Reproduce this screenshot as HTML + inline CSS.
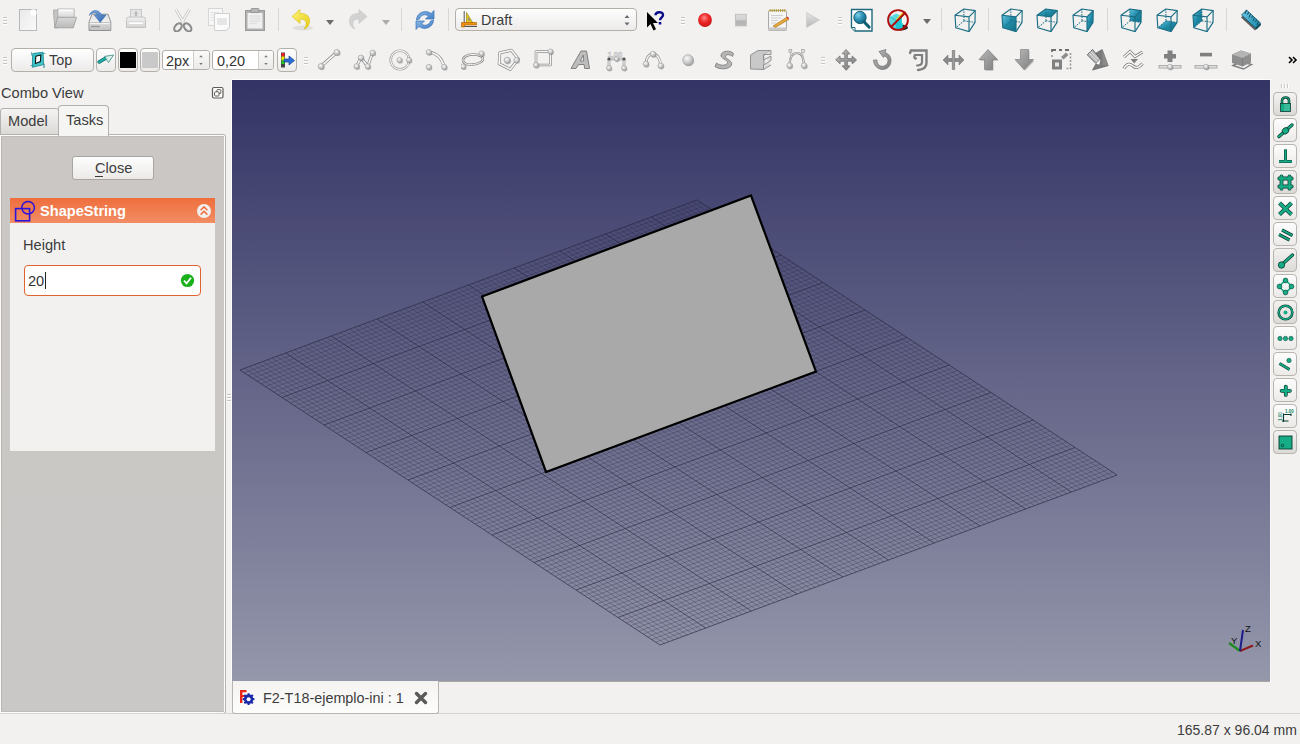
<!DOCTYPE html>
<html><head><meta charset="utf-8">
<style>
*{margin:0;padding:0;box-sizing:border-box}
html,body{width:1300px;height:744px;overflow:hidden;background:#f2f1f0;font-family:"Liberation Sans",sans-serif;color:#3c3c3c;font-size:14px}
.abs{position:absolute}
.t{position:absolute;white-space:nowrap;line-height:1}

</style></head><body>
<svg width="0" height="0" style="position:absolute">
<defs>
<linearGradient id="gPaper" x1="0" y1="0" x2="1" y2="1"><stop offset="0" stop-color="#e9e9e9"/><stop offset="1" stop-color="#fafafa"/></linearGradient>
<linearGradient id="gFold" x1="0" y1="0" x2="0" y2="1"><stop offset="0" stop-color="#d8d8d8"/><stop offset="1" stop-color="#bababa"/></linearGradient>
<linearGradient id="gDrive" x1="0" y1="0" x2="0" y2="1"><stop offset="0" stop-color="#dedede"/><stop offset="0.55" stop-color="#f4f4f4"/><stop offset="1" stop-color="#b0b0b0"/></linearGradient>
<linearGradient id="gPrint" x1="0" y1="0" x2="0" y2="1"><stop offset="0" stop-color="#f0f0f0"/><stop offset="1" stop-color="#d4d4d4"/></linearGradient>
<linearGradient id="gYel" x1="0" y1="0" x2="1" y2="1"><stop offset="0" stop-color="#fcf07a"/><stop offset="1" stop-color="#e9cf12"/></linearGradient>
<linearGradient id="gBlue" x1="0" y1="0" x2="1" y2="1"><stop offset="0" stop-color="#8fb9e8"/><stop offset="1" stop-color="#3d7cc4"/></linearGradient>
<radialGradient id="gRed" cx="0.45" cy="0.35" r="0.7"><stop offset="0" stop-color="#ff8a8a"/><stop offset="0.45" stop-color="#ee2a2a"/><stop offset="1" stop-color="#c41212"/></radialGradient>
<linearGradient id="gStop" x1="0" y1="0" x2="0" y2="1"><stop offset="0" stop-color="#dcdcdc"/><stop offset="0.5" stop-color="#d0d0d0"/><stop offset="0.55" stop-color="#b4b4b4"/><stop offset="1" stop-color="#b8b8b8"/></linearGradient>
<linearGradient id="gPlay" x1="0" y1="0" x2="0" y2="1"><stop offset="0" stop-color="#e4e4e4"/><stop offset="1" stop-color="#b8b8b8"/></linearGradient>
<radialGradient id="gTeal" cx="0.35" cy="0.3" r="0.8"><stop offset="0" stop-color="#7fd0ec"/><stop offset="0.5" stop-color="#2a8fb0"/><stop offset="1" stop-color="#0f5f78"/></radialGradient>
<linearGradient id="gCube" x1="0" y1="0" x2="1" y2="1"><stop offset="0" stop-color="#5fc3e0"/><stop offset="0.5" stop-color="#1f8aa6"/><stop offset="1" stop-color="#136f88"/></linearGradient>
<linearGradient id="gRuler" x1="0" y1="0" x2="1" y2="1"><stop offset="0" stop-color="#6fc8ea"/><stop offset="1" stop-color="#1587a8"/></linearGradient>
<radialGradient id="gBall" cx="0.4" cy="0.35" r="0.7"><stop offset="0" stop-color="#fafafa"/><stop offset="0.6" stop-color="#c9c9c9"/><stop offset="1" stop-color="#9e9e9e"/></radialGradient>
<linearGradient id="gArr" x1="0" y1="0" x2="1" y2="1"><stop offset="0" stop-color="#b9b9b9"/><stop offset="1" stop-color="#7e7e7e"/></linearGradient>
<linearGradient id="gBtn" x1="0" y1="0" x2="0" y2="1"><stop offset="0" stop-color="#fdfdfd"/><stop offset="1" stop-color="#e9e8e6"/></linearGradient>
<linearGradient id="gPaper2" x1="0" y1="0" x2="0" y2="1"><stop offset="0" stop-color="#f8f8f8"/><stop offset="1" stop-color="#d6d6d6"/></linearGradient>
<linearGradient id="gDrive2" x1="0" y1="0" x2="0" y2="1"><stop offset="0" stop-color="#d9d9d9"/><stop offset="1" stop-color="#c2c2c2"/></linearGradient>
<linearGradient id="gBlue2" x1="0" y1="0" x2="1" y2="1"><stop offset="0" stop-color="#86aee0"/><stop offset="1" stop-color="#2d64b0"/></linearGradient>
</defs></svg>

<svg class="abs" style="left:232px;top:80px" width="1038" height="601" viewBox="232 80 1038 601">
<defs><linearGradient id="bg" x1="0" y1="0" x2="0" y2="1">
<stop offset="0" stop-color="#333365"/><stop offset="1" stop-color="#9597ab"/></linearGradient></defs>
<rect x="232" y="80" width="1038" height="601" fill="url(#bg)"/>
<path d="M244.2 372.8L701.2 202.8M244.6 368.3L664.6 643.3M248.4 375.5L705.4 205.5M249.1 366.6L669.1 641.6M252.6 378.2L709.6 208.2M253.7 364.9L673.7 639.9M256.8 381.0L713.8 211.0M258.3 363.2L678.3 638.2M261.0 383.8L718.0 213.8M262.9 361.5L682.9 636.5M265.2 386.5L722.2 216.5M267.4 359.8L687.4 634.8M269.4 389.2L726.4 219.2M272.0 358.1L692.0 633.1M273.6 392.0L730.6 222.0M276.6 356.4L696.6 631.4M277.8 394.8L734.8 224.8M281.1 354.7L701.1 629.7M286.2 400.2L743.2 230.2M290.3 351.3L710.3 626.3M290.4 403.0L747.4 233.0M294.8 349.6L714.8 624.6M294.6 405.8L751.6 235.8M299.4 347.9L719.4 622.9M298.8 408.5L755.8 238.5M304.0 346.2L724.0 621.2M303.0 411.2L760.0 241.2M308.6 344.5L728.5 619.5M307.2 414.0L764.2 244.0M313.1 342.8L733.1 617.8M311.4 416.8L768.4 246.8M317.7 341.1L737.7 616.1M315.6 419.5L772.6 249.5M322.3 339.4L742.3 614.4M319.8 422.2L776.8 252.2M326.8 337.7L746.8 612.7M328.2 427.8L785.2 257.8M336.0 334.3L756.0 609.3M332.4 430.5L789.4 260.5M340.5 332.6L760.5 607.6M336.6 433.2L793.6 263.2M345.1 330.9L765.1 605.9M340.8 436.0L797.8 266.0M349.7 329.2L769.7 604.2M345.0 438.8L802.0 268.8M354.2 327.5L774.2 602.5M349.2 441.5L806.2 271.5M358.8 325.8L778.8 600.8M353.4 444.2L810.4 274.2M363.4 324.1L783.4 599.1M357.6 447.0L814.6 277.0M368.0 322.4L788.0 597.4M361.8 449.8L818.8 279.8M372.5 320.7L792.5 595.7M370.2 455.2L827.2 285.2M381.7 317.3L801.7 592.3M374.4 458.0L831.4 288.0M386.2 315.6L806.2 590.6M378.6 460.8L835.6 290.8M390.8 313.9L810.8 588.9M382.8 463.5L839.8 293.5M395.4 312.2L815.4 587.2M387.0 466.2L844.0 296.2M399.9 310.5L820.0 585.5M391.2 469.0L848.2 299.0M404.5 308.8L824.5 583.8M395.4 471.8L852.4 301.8M409.1 307.1L829.1 582.1M399.6 474.5L856.6 304.5M413.7 305.4L833.7 580.4M403.8 477.2L860.8 307.2M418.2 303.7L838.2 578.7M412.2 482.8L869.2 312.8M427.4 300.3L847.4 575.3M416.4 485.5L873.4 315.5M431.9 298.6L851.9 573.6M420.6 488.2L877.6 318.2M436.5 296.9L856.5 571.9M424.8 491.0L881.8 321.0M441.1 295.2L861.1 570.2M429.0 493.8L886.0 323.8M445.6 293.5L865.6 568.5M433.2 496.5L890.2 326.5M450.2 291.8L870.2 566.8M437.4 499.2L894.4 329.2M454.8 290.1L874.8 565.1M441.6 502.0L898.6 332.0M459.4 288.4L879.4 563.4M445.8 504.8L902.8 334.8M463.9 286.7L883.9 561.7M454.2 510.2L911.2 340.2M473.1 283.3L893.1 558.3M458.4 513.0L915.4 343.0M477.6 281.6L897.6 556.6M462.6 515.8L919.6 345.8M482.2 279.9L902.2 554.9M466.8 518.5L923.8 348.5M486.8 278.2L906.8 553.2M471.0 521.2L928.0 351.2M491.4 276.5L911.4 551.5M475.2 524.0L932.2 354.0M495.9 274.8L915.9 549.8M479.4 526.8L936.4 356.8M500.5 273.1L920.5 548.1M483.6 529.5L940.6 359.5M505.1 271.4L925.1 546.4M487.8 532.2L944.8 362.2M509.6 269.7L929.6 544.7M496.2 537.8L953.2 367.8M518.8 266.3L938.8 541.3M500.4 540.5L957.4 370.5M523.3 264.6L943.3 539.6M504.6 543.2L961.6 373.2M527.9 262.9L947.9 537.9M508.8 546.0L965.8 376.0M532.5 261.2L952.5 536.2M513.0 548.8L970.0 378.8M537.0 259.5L957.0 534.5M517.2 551.5L974.2 381.5M541.6 257.8L961.6 532.8M521.4 554.2L978.4 384.2M546.2 256.1L966.2 531.1M525.6 557.0L982.6 387.0M550.8 254.4L970.8 529.4M529.8 559.8L986.8 389.8M555.3 252.7L975.3 527.7M538.2 565.2L995.2 395.2M564.5 249.3L984.5 524.3M542.4 568.0L999.4 398.0M569.0 247.6L989.0 522.6M546.6 570.8L1003.6 400.8M573.6 245.9L993.6 520.9M550.8 573.5L1007.8 403.5M578.2 244.2L998.2 519.2M555.0 576.2L1012.0 406.2M582.8 242.5L1002.8 517.5M559.2 579.0L1016.2 409.0M587.3 240.8L1007.3 515.8M563.4 581.8L1020.4 411.8M591.9 239.1L1011.9 514.1M567.6 584.5L1024.6 414.5M596.5 237.4L1016.5 512.4M571.8 587.2L1028.8 417.2M601.0 235.7L1021.0 510.7M580.2 592.8L1037.2 422.8M610.2 232.3L1030.2 507.3M584.4 595.5L1041.4 425.5M614.7 230.6L1034.7 505.6M588.6 598.2L1045.6 428.2M619.3 228.9L1039.3 503.9M592.8 601.0L1049.8 431.0M623.9 227.2L1043.9 502.2M597.0 603.8L1054.0 433.8M628.5 225.5L1048.5 500.5M601.2 606.5L1058.2 436.5M633.0 223.8L1053.0 498.8M605.4 609.2L1062.4 439.2M637.6 222.1L1057.6 497.1M609.6 612.0L1066.6 442.0M642.2 220.4L1062.2 495.4M613.8 614.8L1070.8 444.8M646.7 218.7L1066.7 493.7M622.2 620.2L1079.2 450.2M655.9 215.3L1075.9 490.3M626.4 623.0L1083.4 453.0M660.4 213.6L1080.4 488.6M630.6 625.8L1087.6 455.8M665.0 211.9L1085.0 486.9M634.8 628.5L1091.8 458.5M669.6 210.2L1089.6 485.2M639.0 631.2L1096.0 461.2M674.1 208.5L1094.2 483.5M643.2 634.0L1100.2 464.0M678.7 206.8L1098.7 481.8M647.4 636.8L1104.4 466.8M683.3 205.1L1103.3 480.1M651.6 639.5L1108.6 469.5M687.9 203.4L1107.9 478.4M655.8 642.2L1112.8 472.2M692.4 201.7L1112.4 476.7" stroke="#23233a" stroke-opacity="0.28" stroke-width="1" fill="none"/>
<path d="M240.0 370.0L697.0 200.0M240.0 370.0L660.0 645.0M282.0 397.5L739.0 227.5M285.7 353.0L705.7 628.0M324.0 425.0L781.0 255.0M331.4 336.0L751.4 611.0M366.0 452.5L823.0 282.5M377.1 319.0L797.1 594.0M408.0 480.0L865.0 310.0M422.8 302.0L842.8 577.0M450.0 507.5L907.0 337.5M468.5 285.0L888.5 560.0M492.0 535.0L949.0 365.0M514.2 268.0L934.2 543.0M534.0 562.5L991.0 392.5M559.9 251.0L979.9 526.0M576.0 590.0L1033.0 420.0M605.6 234.0L1025.6 509.0M618.0 617.5L1075.0 447.5M651.3 217.0L1071.3 492.0M660.0 645.0L1117.0 475.0M697.0 200.0L1117.0 475.0" stroke="#23233a" stroke-opacity="0.62" stroke-width="1" fill="none"/>
<path d="M482 296.5L751 195.5L816 371.5L546 472Z" fill="#a9a9a9" stroke="#000" stroke-width="2.2" stroke-linejoin="miter"/>
<g>
<path d="M1240 651L1253 645.5" stroke="#8c1c1c" stroke-width="2.2"/>
<path d="M1240 651L1229 643" stroke="#1c8c1c" stroke-width="2.2"/>
<path d="M1240 651L1243 630" stroke="#1c1c8c" stroke-width="2"/>
<text x="1245" y="632" font-family="Liberation Sans" font-size="9.5" fill="#111">Z</text>
<text x="1231" y="644" font-family="Liberation Sans" font-size="9.5" fill="#111">Y</text>
<text x="1255" y="647" font-family="Liberation Sans" font-size="9.5" fill="#111">X</text>
</g>

</svg>
<div class="t" style="left:1px;top:86px;font-size:14.6px">Combo View</div>
<svg class="abs" style="left:210px;top:85px" width="16" height="15" viewBox="0 0 16 15">
<rect x="2.5" y="2.5" width="10.5" height="10.5" rx="1.5" fill="#fdfdfc" stroke="#5f5c57" stroke-width="1.2"/>
<rect x="6.8" y="4.6" width="4" height="4" rx="0.8" fill="none" stroke="#5f5c57" stroke-width="1"/>
<rect x="4.6" y="6.8" width="4.4" height="4.2" rx="0.8" fill="#fff" stroke="#5f5c57" stroke-width="1"/>
</svg>
<!-- tabs -->
<div class="abs" style="left:0;top:134px;width:226px;height:580px;border:1px solid #b8b4af;border-left:none;border-radius:0 3px 3px 0;background:#fbfbfa"></div>
<div class="abs" style="left:0;top:135px;width:1px;height:578px;background:#fbfbfa"></div>
<div class="abs" style="left:1px;top:136px;width:223px;height:576px;background:linear-gradient(#cbc7c4,#c9c8c6);border-left:1px solid #b9b6b2;border-top:1px solid #c0bdb9;border-bottom:1px solid #c0bdb9"></div>
<div class="abs" style="left:0;top:108px;width:59px;height:27px;border:1px solid #b4b0ab;border-radius:3px 3px 0 0;background:linear-gradient(#f4f3f2,#dcdad7)"></div>
<div class="t" style="left:8px;top:114px;font-size:14.6px">Model</div>
<div class="abs" style="left:58px;top:105px;width:51px;height:31px;border:1px solid #b4b0ab;border-bottom:none;border-radius:4px 4px 0 0;background:#f5f5f4"></div>
<div class="t" style="left:66px;top:113px;font-size:14.6px">Tasks</div>
<!-- close btn -->
<div class="abs" style="left:72px;top:156px;width:82px;height:24px;border:1px solid #a9a5a0;border-radius:3px;background:linear-gradient(#fdfdfd,#ebeae8)"></div>
<div class="t" style="left:95px;top:161px;font-size:14.6px">Close</div>
<div class="abs" style="left:95px;top:176px;width:8px;height:1px;background:#3c3c3c"></div>
<!-- header -->
<div class="abs" style="left:10px;top:198px;width:205px;height:25px;background:linear-gradient(#ef6e3d,#f28d63)"></div>
<svg class="abs" style="left:10px;top:196px" width="30" height="30" viewBox="0 0 30 30">
<rect x="5.6" y="12.6" width="14" height="12.2" fill="none" stroke="#2b14dc" stroke-width="1.6"/>
<circle cx="18.1" cy="11.7" r="6.3" fill="none" stroke="#2b14dc" stroke-width="1.5"/>
</svg>
<div class="t" style="left:40px;top:204px;font-size:14.6px;font-weight:bold;color:#fff">ShapeString</div>
<svg class="abs" style="left:196px;top:203px" width="16" height="16" viewBox="0 0 16 16">
<circle cx="8" cy="8" r="7" fill="#f1f0ef"/>
<path d="M4.6 7.2L8 3.9L11.4 7.2M4.6 11.6L8 8.3L11.4 11.6" fill="none" stroke="#ef6e3d" stroke-width="1.5"/>
</svg>
<!-- content -->
<div class="abs" style="left:10px;top:223px;width:205px;height:228px;background:#f2f1f0"></div>
<div class="t" style="left:23px;top:238px;font-size:14.6px">Height</div>
<div class="abs" style="left:24px;top:265px;width:177px;height:31px;border:1.5px solid #e2622f;border-radius:4px;background:#fff"></div>
<div class="t" style="left:28px;top:274px;font-size:14.6px;color:#333">20</div>
<div class="abs" style="left:45px;top:272px;width:1px;height:17px;background:#222"></div>
<svg class="abs" style="left:180px;top:273px" width="15" height="15" viewBox="0 0 15 15">
<circle cx="7.5" cy="7.5" r="6.6" fill="#1ab01a"/>
<path d="M4 7.6L6.6 10.3L11 4.8" fill="none" stroke="#fff" stroke-width="1.8"/>
</svg>

<svg class="abs" style="left:16.0px;top:8.0px" width="24" height="24" viewBox="0 0 24 24"><rect x="3.5" y="1.5" width="17" height="21" fill="url(#gPaper)" stroke="#b9b9b9"/>
<circle cx="17.5" cy="4.5" r="3.2" fill="#fff" opacity="0.9"/></svg>
<svg class="abs" style="left:52.5px;top:7.0px" width="24" height="24" viewBox="0 0 24 24"><path d="M0.3 3H5L4.8 20.8H1.8Z" fill="#c4c4c4" stroke="#a6a6a6" stroke-width="0.8"/>
<path d="M4.8 2H21.2V10.5H4.8Z" fill="url(#gPaper2)" stroke="#a9a9a9" stroke-width="0.8"/>
<path d="M6 3.2H20" stroke="#fff" stroke-width="1.2"/>
<path d="M4.8 10.3H23.5L20.3 20.8H1.5Z" fill="url(#gFold)" stroke="#9b9b9b" stroke-width="0.8"/></svg>
<svg class="abs" style="left:88.0px;top:8.0px" width="24" height="24" viewBox="0 0 24 24"><path d="M4 6.2H20L22.8 14V22.5H1V14Z" fill="url(#gDrive)" stroke="#8a8a8a" stroke-width="0.9"/>
<path d="M1.5 14.5H22.3" stroke="#b5b5b5" stroke-width="0.8"/>
<path d="M2 16H22.3V22H2Z" fill="url(#gDrive2)"/>
<path d="M3 18.5H12" stroke="#9a9a9a" stroke-width="1.6"/>
<path d="M15.5 17V21M17.5 17V21M19.5 17V21" stroke="#c8c8c8" stroke-width="0.9"/>
<path d="M1.2 7.5C2.5 2 10 0 13.8 7H18L12.2 14.5L6.3 7H10C7.5 3.8 3.8 4.5 1.2 7.5Z" fill="url(#gBlue2)" stroke="#2f66a8" stroke-width="0.5"/></svg>
<svg class="abs" style="left:124.0px;top:8.0px" width="24" height="24" viewBox="0 0 24 24"><rect x="6.5" y="1.5" width="11" height="9" fill="#e6e6e6" stroke="#c8c8c8"/>
<path d="M12 3L9.5 5.8H11V8H13V5.8H14.5Z" fill="#bbb"/>
<path d="M2.5 11.5Q2.5 9 5 9H19Q21.5 9 21.5 11.5V19.5H2.5Z" fill="url(#gPrint)" stroke="#c4c4c4"/>
<rect x="4.5" y="14" width="15" height="2.5" rx="1" fill="#fff" stroke="#cfcfcf" stroke-width="0.6"/></svg>
<svg class="abs" style="left:171.0px;top:7.5px" width="24" height="24" viewBox="0 0 24 24"><path d="M4.8 1.2L12.5 14.5M18.6 1.2L10.9 14.5" stroke="#c4c4c4" stroke-width="2.8"/>
<path d="M4.8 1.2L12.5 14.5M18.6 1.2L10.9 14.5" stroke="#f8f8f8" stroke-width="1.3"/>
<ellipse cx="7" cy="19.3" rx="4.6" ry="3" transform="rotate(-50 7 19.3)" fill="none" stroke="#8c8c8c" stroke-width="2.1"/>
<ellipse cx="16.6" cy="19.3" rx="4.6" ry="3" transform="rotate(50 16.6 19.3)" fill="none" stroke="#8c8c8c" stroke-width="2.1"/>
<path d="M10.5 15.5L9.5 17M12.9 15.5L13.9 17" stroke="#8c8c8c" stroke-width="1.6"/></svg>
<svg class="abs" style="left:206.5px;top:8.0px" width="24" height="24" viewBox="0 0 24 24"><rect x="1.5" y="0.5" width="14" height="17" fill="#f7f7f7" stroke="#d6d6d6"/>
<path d="M3.5 4.5H12M3.5 7H12M3.5 9.5H12M3.5 12H12" stroke="#e0e0e0"/>
<path d="M7.5 5.5H22.5V19L19.5 22.5H7.5Z" fill="#fbfbfb" stroke="#cfcfcf"/>
<rect x="10" y="10" width="10" height="7" fill="#e6e6e6"/></svg>
<svg class="abs" style="left:243.0px;top:8.0px" width="24" height="24" viewBox="0 0 24 24"><rect x="2.5" y="2.5" width="19" height="20" fill="#b0b0b0" stroke="#9a9a9a"/>
<rect x="4.5" y="5" width="15" height="15.5" fill="#f0f0f0"/>
<rect x="8" y="0.5" width="8" height="4" rx="1" fill="#b5b5b5" stroke="#8e8e8e" stroke-width="0.8"/>
<path d="M6.5 8H17.5M6.5 10.5H17.5M6.5 13H17.5M6.5 15.5H14" stroke="#e0e0e0" stroke-width="1.5"/></svg>
<svg class="abs" style="left:291.0px;top:7.5px" width="24" height="24" viewBox="0 0 24 24"><ellipse cx="12" cy="20" rx="10" ry="2.5" fill="#000" opacity="0.08"/>
<path d="M1 8.5L9 1.5V5.5C16 5 19 9 18.5 14C18 18 15.5 20.5 13 21C15.5 18 16 14 13.5 12C12 11 10.5 11 9 11.5V15.5Z" fill="url(#gYel)" stroke="#d7bb10" stroke-width="0.6"/></svg>
<svg class="abs" style="left:318.2px;top:9.5px" width="24" height="24" viewBox="0 0 24 24"><path d="M8 10H16L12 15Z" fill="#6c6c6c"/></svg>
<svg class="abs" style="left:344.2px;top:7.5px" width="24" height="24" viewBox="0 0 24 24"><path d="M23 8.5L15 1.5V5.5C8 5 5 9 5.5 14C6 18 8.5 20.5 11 21C8.5 18 8 14 10.5 12C12 11 13.5 11 15 11.5V15.5Z" fill="#d2d2d2" stroke="#c6c6c6" stroke-width="0.6"/></svg>
<svg class="abs" style="left:374.2px;top:9.5px" width="24" height="24" viewBox="0 0 24 24"><path d="M8 10H16L12 15Z" fill="#ababab"/></svg>
<svg class="abs" style="left:413.3px;top:7.5px" width="24" height="24" viewBox="0 0 24 24"><path d="M3.5 12C3.5 5 12 1 18 5.5L21 2.5V11H12.5L15.5 8C12 5.5 7.5 7 6.5 11Z" fill="url(#gBlue)" stroke="#3b74b8" stroke-width="0.7"/>
<path d="M20.5 12C20.5 19 12 23 6 18.5L3 21.5V13H11.5L8.5 16C12 18.5 16.5 17 17.5 13Z" fill="url(#gBlue)" stroke="#3b74b8" stroke-width="0.7"/></svg>
<svg class="abs" style="left:644.0px;top:8.0px" width="24" height="24" viewBox="0 0 24 24"><path d="M3 4V19.5L6.5 16L9.5 22.5L12 21.3L9 15H14Z" fill="#000"/>
<path d="M11.5 7.2C11.5 3.5 19 3 19 7C19 9.5 16 9.8 16 12.2" fill="none" stroke="#0a0a8c" stroke-width="2.4"/>
<rect x="14.7" y="14" width="2.6" height="2.5" fill="#0a0a8c"/></svg>
<svg class="abs" style="left:693.0px;top:7.7px" width="24" height="24" viewBox="0 0 24 24"><circle cx="12" cy="12" r="6.9" fill="url(#gRed)"/></svg>
<svg class="abs" style="left:729.3px;top:7.7px" width="24" height="24" viewBox="0 0 24 24"><rect x="6.5" y="6.3" width="10.8" height="11.6" fill="url(#gStop)" stroke="#bdbdbd" stroke-width="0.9"/></svg>
<svg class="abs" style="left:765.5px;top:7.5px" width="24" height="24" viewBox="0 0 24 24"><rect x="2.5" y="2.5" width="18" height="20" rx="1" fill="#f5f5f5" stroke="#a8a8a8"/>
<rect x="2.5" y="19.5" width="18" height="3" fill="#c8c8c8"/>
<path d="M3.5 2.5H19.5" stroke="#b39a2a" stroke-width="2.4" stroke-dasharray="1.2 0.9"/>
<path d="M5 7.5H17M5 10H15M5 12.5H12M5 15H10" stroke="#cfcfcf" stroke-width="1"/>
<path d="M7 18L20.5 9.5L22.5 11.5L9.5 19.5Z" fill="#e8a93a" stroke="#9a6a1a" stroke-width="0.6"/>
<path d="M20.5 9.5L22.5 11.5L23 10L21.5 8.6Z" fill="#d33"/></svg>
<svg class="abs" style="left:801.0px;top:7.7px" width="24" height="24" viewBox="0 0 24 24"><path d="M5.6 4.5V19.5L18.5 12Z" fill="url(#gPlay)" stroke="#c3c3c3" stroke-width="0.6"/></svg>
<svg class="abs" style="left:849.7px;top:7.5px" width="24" height="24" viewBox="0 0 24 24"><path d="M1.5 1.5H22V23H5L1.5 19.5Z" fill="#fff" stroke="#1d6a7e" stroke-width="1.4"/>
<path d="M1.5 19.5H5V23" fill="#fff" stroke="#1d6a7e" stroke-width="1"/>
<circle cx="10" cy="9.5" r="6.2" fill="url(#gTeal)" stroke="#0d5062" stroke-width="0.8"/>
<path d="M14.2 14L19 19" stroke="#0e5f74" stroke-width="3.2" stroke-linecap="round"/></svg>
<svg class="abs" style="left:886.0px;top:8.0px" width="24" height="24" viewBox="0 0 24 24"><ellipse cx="14.5" cy="19.5" rx="7.5" ry="3" fill="#222"/>
<path d="M3.5 9L10 5.5L16.5 8.5V20.5L10 22L3.5 19Z" fill="#5fd8e0"/>
<path d="M10 12V22M3.5 9L10 12L16.5 8.5" stroke="#33b5c0" stroke-width="0.8" fill="none"/>
<path d="M10 12L16.5 8.5V20.5L10 22Z" fill="#1cc8d6"/>
<path d="M16.5 15V8.5" stroke="#fff" stroke-width="1.2"/>
<path d="M10.5 12L17 5" stroke="#e8d41a" stroke-width="1.8"/>
<circle cx="19" cy="4" r="0.8" fill="#d08020"/>
<circle cx="12" cy="12" r="9.9" fill="none" stroke="#b00c0c" stroke-width="1.9"/>
<path d="M5 19L19 5" stroke="#b00c0c" stroke-width="1.9"/></svg>
<svg class="abs" style="left:914.5px;top:8.5px" width="24" height="24" viewBox="0 0 24 24"><path d="M8 10H16L12 15Z" fill="#6c6c6c"/></svg>
<svg class="abs" style="left:952.5px;top:7.8px" width="24" height="24" viewBox="0 0 24 24"><path d="M10.8 1.0L11.0 12.8M11.0 12.8L2.8 19.8M11.0 12.8L22.0 14.4" stroke="#1b6e84" stroke-width="1" stroke-dasharray="1.5 1" fill="none"/><path d="M2.0 7.2L10.8 1.0L22.2 2.6L22.0 14.4L16.0 23.6L2.8 19.8Z" fill="none" stroke="#1b6e84" stroke-width="1.15" stroke-linejoin="round"/><path d="M2.0 7.2L16.0 8.8L22.2 2.6M16.0 8.8L16.0 23.6" fill="none" stroke="#1b6e84" stroke-width="1.15"/></svg>
<svg class="abs" style="left:999.5px;top:7.8px" width="24" height="24" viewBox="0 0 24 24"><path d="M2.0 7.2L16.0 8.8L16.0 23.6L2.8 19.8Z" fill="url(#gCube)"/><path d="M10.8 1.0L11.0 12.8M11.0 12.8L2.8 19.8M11.0 12.8L22.0 14.4" stroke="#1b6e84" stroke-width="1" stroke-dasharray="1.5 1" fill="none"/><path d="M2.0 7.2L10.8 1.0L22.2 2.6L22.0 14.4L16.0 23.6L2.8 19.8Z" fill="none" stroke="#1b6e84" stroke-width="1.15" stroke-linejoin="round"/><path d="M2.0 7.2L16.0 8.8L22.2 2.6M16.0 8.8L16.0 23.6" fill="none" stroke="#1b6e84" stroke-width="1.15"/></svg>
<svg class="abs" style="left:1035.2px;top:7.8px" width="24" height="24" viewBox="0 0 24 24"><path d="M2.0 7.2L10.8 1.0L22.2 2.6L16.0 8.8Z" fill="url(#gCube)"/><path d="M10.8 1.0L11.0 12.8M11.0 12.8L2.8 19.8M11.0 12.8L22.0 14.4" stroke="#1b6e84" stroke-width="1" stroke-dasharray="1.5 1" fill="none"/><path d="M2.0 7.2L10.8 1.0L22.2 2.6L22.0 14.4L16.0 23.6L2.8 19.8Z" fill="none" stroke="#1b6e84" stroke-width="1.15" stroke-linejoin="round"/><path d="M2.0 7.2L16.0 8.8L22.2 2.6M16.0 8.8L16.0 23.6" fill="none" stroke="#1b6e84" stroke-width="1.15"/></svg>
<svg class="abs" style="left:1071.4px;top:7.8px" width="24" height="24" viewBox="0 0 24 24"><path d="M16.0 8.8L22.2 2.6L22.0 14.4L16.0 23.6Z" fill="url(#gCube)"/><path d="M10.8 1.0L11.0 12.8M11.0 12.8L2.8 19.8M11.0 12.8L22.0 14.4" stroke="#1b6e84" stroke-width="1" stroke-dasharray="1.5 1" fill="none"/><path d="M2.0 7.2L10.8 1.0L22.2 2.6L22.0 14.4L16.0 23.6L2.8 19.8Z" fill="none" stroke="#1b6e84" stroke-width="1.15" stroke-linejoin="round"/><path d="M2.0 7.2L16.0 8.8L22.2 2.6M16.0 8.8L16.0 23.6" fill="none" stroke="#1b6e84" stroke-width="1.15"/></svg>
<svg class="abs" style="left:1118.5px;top:7.8px" width="24" height="24" viewBox="0 0 24 24"><path d="M10.8 1.0L22.2 2.6L22.0 14.4L11.0 12.8Z" fill="url(#gCube)"/><path d="M10.8 1.0L11.0 12.8M11.0 12.8L2.8 19.8M11.0 12.8L22.0 14.4" stroke="#1b6e84" stroke-width="1" stroke-dasharray="1.5 1" fill="none"/><path d="M2.0 7.2L10.8 1.0L22.2 2.6L22.0 14.4L16.0 23.6L2.8 19.8Z" fill="none" stroke="#1b6e84" stroke-width="1.15" stroke-linejoin="round"/><path d="M2.0 7.2L16.0 8.8L22.2 2.6M16.0 8.8L16.0 23.6" fill="none" stroke="#1b6e84" stroke-width="1.15"/></svg>
<svg class="abs" style="left:1154.8px;top:7.8px" width="24" height="24" viewBox="0 0 24 24"><path d="M2.8 19.8L16.0 23.6L22.0 14.4L11.0 12.8Z" fill="url(#gCube)"/><path d="M10.8 1.0L11.0 12.8M11.0 12.8L2.8 19.8M11.0 12.8L22.0 14.4" stroke="#1b6e84" stroke-width="1" stroke-dasharray="1.5 1" fill="none"/><path d="M2.0 7.2L10.8 1.0L22.2 2.6L22.0 14.4L16.0 23.6L2.8 19.8Z" fill="none" stroke="#1b6e84" stroke-width="1.15" stroke-linejoin="round"/><path d="M2.0 7.2L16.0 8.8L22.2 2.6M16.0 8.8L16.0 23.6" fill="none" stroke="#1b6e84" stroke-width="1.15"/></svg>
<svg class="abs" style="left:1190.5px;top:7.8px" width="24" height="24" viewBox="0 0 24 24"><path d="M2.0 7.2L10.8 1.0L11.0 12.8L2.8 19.8Z" fill="url(#gCube)"/><path d="M10.8 1.0L11.0 12.8M11.0 12.8L2.8 19.8M11.0 12.8L22.0 14.4" stroke="#1b6e84" stroke-width="1" stroke-dasharray="1.5 1" fill="none"/><path d="M2.0 7.2L10.8 1.0L22.2 2.6L22.0 14.4L16.0 23.6L2.8 19.8Z" fill="none" stroke="#1b6e84" stroke-width="1.15" stroke-linejoin="round"/><path d="M2.0 7.2L16.0 8.8L22.2 2.6M16.0 8.8L16.0 23.6" fill="none" stroke="#1b6e84" stroke-width="1.15"/></svg>
<svg class="abs" style="left:1237.5px;top:7.5px" width="24" height="24" viewBox="0 0 24 24"><path d="M3 9.5L8.5 4L22.5 17L17 22.5Z" fill="#3a3a3a" opacity="0.8"/>
<path d="M3.5 7L8.5 2L22.5 15L17.5 20Z" fill="url(#gRuler)" stroke="#0f5468" stroke-width="0.8"/>
<path d="M22.5 15L17.5 20L18.5 21.5L23 17Z" fill="#0d4a5c"/>
<path d="M8.5 2L7 6M10.5 4L9.6 6.6M12.5 5.7L11 9.5M14.5 7.6L13.6 10.2M16.5 9.4L15 13.2M18.5 11.2L17.6 13.8M20.5 13L19 16.8" stroke="#0c3f4e" stroke-width="0.9"/></svg>
<svg class="abs" style="left:317.0px;top:47.5px" width="24" height="24" viewBox="0 0 24 24"><path d="M4 18.3L19.8 4.3" fill="none" stroke="#8e8e8e" stroke-width="3.2" stroke-linejoin="round"/><path d="M4 18.3L19.8 4.3" fill="none" stroke="#f6f6f6" stroke-width="1.8" stroke-linejoin="round"/><circle cx="19.8" cy="4.3" r="2.9" fill="#7a7a7a" opacity="0.5" transform="translate(0.8,0.9)"/><circle cx="19.8" cy="4.3" r="2.9" fill="url(#gBall)" stroke="#9a9a9a" stroke-width="0.5"/><circle cx="4.0" cy="18.3" r="2.9" fill="#7a7a7a" opacity="0.5" transform="translate(0.8,0.9)"/><circle cx="4.0" cy="18.3" r="2.9" fill="url(#gBall)" stroke="#9a9a9a" stroke-width="0.5"/></svg>
<svg class="abs" style="left:353.0px;top:47.5px" width="24" height="24" viewBox="0 0 24 24"><path d="M3.6 18.3L7.9 9.7L14.7 18.3L19.6 4.8" fill="none" stroke="#8e8e8e" stroke-width="3.0" stroke-linejoin="round"/><path d="M3.6 18.3L7.9 9.7L14.7 18.3L19.6 4.8" fill="none" stroke="#f6f6f6" stroke-width="1.6" stroke-linejoin="round"/><circle cx="7.9" cy="9.7" r="2.7" fill="#7a7a7a" opacity="0.5" transform="translate(0.8,0.9)"/><circle cx="7.9" cy="9.7" r="2.7" fill="url(#gBall)" stroke="#9a9a9a" stroke-width="0.5"/><circle cx="3.6" cy="18.3" r="2.7" fill="#7a7a7a" opacity="0.5" transform="translate(0.8,0.9)"/><circle cx="3.6" cy="18.3" r="2.7" fill="url(#gBall)" stroke="#9a9a9a" stroke-width="0.5"/><circle cx="14.7" cy="18.3" r="2.7" fill="#7a7a7a" opacity="0.5" transform="translate(0.8,0.9)"/><circle cx="14.7" cy="18.3" r="2.7" fill="url(#gBall)" stroke="#9a9a9a" stroke-width="0.5"/><circle cx="19.6" cy="4.8" r="2.7" fill="#7a7a7a" opacity="0.5" transform="translate(0.8,0.9)"/><circle cx="19.6" cy="4.8" r="2.7" fill="url(#gBall)" stroke="#9a9a9a" stroke-width="0.5"/></svg>
<svg class="abs" style="left:389.0px;top:47.5px" width="24" height="24" viewBox="0 0 24 24"><circle cx="11" cy="12" r="9.3" fill="none" stroke="#9e9e9e" stroke-width="2.6"/><circle cx="11" cy="12" r="9.3" fill="none" stroke="#f6f6f6" stroke-width="1.2"/><circle cx="10.5" cy="12.0" r="2.6" fill="#7a7a7a" opacity="0.5" transform="translate(0.8,0.9)"/><circle cx="10.5" cy="12.0" r="2.6" fill="url(#gBall)" stroke="#9a9a9a" stroke-width="0.5"/><circle cx="20.0" cy="12.0" r="2.6" fill="#7a7a7a" opacity="0.5" transform="translate(0.8,0.9)"/><circle cx="20.0" cy="12.0" r="2.6" fill="url(#gBall)" stroke="#9a9a9a" stroke-width="0.5"/></svg>
<svg class="abs" style="left:424.8px;top:47.5px" width="24" height="24" viewBox="0 0 24 24"><path d="M4 4.2C11 5 17 10 19.2 19" fill="none" stroke="#8e8e8e" stroke-width="3.0" stroke-linejoin="round"/><path d="M4 4.2C11 5 17 10 19.2 19" fill="none" stroke="#f6f6f6" stroke-width="1.6" stroke-linejoin="round"/><circle cx="3.8" cy="4.2" r="2.7" fill="#7a7a7a" opacity="0.5" transform="translate(0.8,0.9)"/><circle cx="3.8" cy="4.2" r="2.7" fill="url(#gBall)" stroke="#9a9a9a" stroke-width="0.5"/><circle cx="19.2" cy="19.0" r="2.7" fill="#7a7a7a" opacity="0.5" transform="translate(0.8,0.9)"/><circle cx="19.2" cy="19.0" r="2.7" fill="url(#gBall)" stroke="#9a9a9a" stroke-width="0.5"/><circle cx="3.8" cy="19.0" r="2.7" fill="#7a7a7a" opacity="0.5" transform="translate(0.8,0.9)"/><circle cx="3.8" cy="19.0" r="2.7" fill="url(#gBall)" stroke="#9a9a9a" stroke-width="0.5"/></svg>
<svg class="abs" style="left:460.7px;top:48.0px" width="24" height="24" viewBox="0 0 24 24"><path d="M12 6.5C5.5 6.5 1.8 9.5 2 12.5C2.5 15.5 6 17 11.5 16.5C18 16 22 13.5 22 11C22 8.5 18 6.5 12 6.5Z" fill="none" stroke="#8e8e8e" stroke-width="2.4" stroke-linejoin="round"/><path d="M12 6.5C5.5 6.5 1.8 9.5 2 12.5C2.5 15.5 6 17 11.5 16.5C18 16 22 13.5 22 11C22 8.5 18 6.5 12 6.5Z" fill="none" stroke="#f6f6f6" stroke-width="1.0" stroke-linejoin="round"/><circle cx="20.5" cy="5.5" r="2.6" fill="#7a7a7a" opacity="0.5" transform="translate(0.8,0.9)"/><circle cx="20.5" cy="5.5" r="2.6" fill="url(#gBall)" stroke="#9a9a9a" stroke-width="0.5"/><circle cx="2.2" cy="18.5" r="2.6" fill="#7a7a7a" opacity="0.5" transform="translate(0.8,0.9)"/><circle cx="2.2" cy="18.5" r="2.6" fill="url(#gBall)" stroke="#9a9a9a" stroke-width="0.5"/></svg>
<svg class="abs" style="left:497.0px;top:47.5px" width="24" height="24" viewBox="0 0 24 24"><path d="M2.8 4.8L14.5 2.3L21.3 11L13.3 21.4L2.2 15.9Z" fill="none" stroke="#8e8e8e" stroke-width="3.0" stroke-linejoin="round"/><path d="M2.8 4.8L14.5 2.3L21.3 11L13.3 21.4L2.2 15.9Z" fill="none" stroke="#f6f6f6" stroke-width="1.6" stroke-linejoin="round"/><circle cx="10.2" cy="12.2" r="3.1" fill="#7a7a7a" opacity="0.5" transform="translate(0.8,0.9)"/><circle cx="10.2" cy="12.2" r="3.1" fill="url(#gBall)" stroke="#9a9a9a" stroke-width="0.5"/><circle cx="19.5" cy="12.2" r="2.7" fill="#7a7a7a" opacity="0.5" transform="translate(0.8,0.9)"/><circle cx="19.5" cy="12.2" r="2.7" fill="url(#gBall)" stroke="#9a9a9a" stroke-width="0.5"/></svg>
<svg class="abs" style="left:532.8px;top:48.0px" width="24" height="24" viewBox="0 0 24 24"><path d="M3 3.5H17.5V17H3Z" fill="none" stroke="#8e8e8e" stroke-width="2.6" stroke-linejoin="round"/><path d="M3 3.5H17.5V17H3Z" fill="none" stroke="#f6f6f6" stroke-width="1.2" stroke-linejoin="round"/><circle cx="17.5" cy="3.5" r="2.6" fill="#7a7a7a" opacity="0.5" transform="translate(0.8,0.9)"/><circle cx="17.5" cy="3.5" r="2.6" fill="url(#gBall)" stroke="#9a9a9a" stroke-width="0.5"/><circle cx="3.0" cy="17.0" r="2.6" fill="#7a7a7a" opacity="0.5" transform="translate(0.8,0.9)"/><circle cx="3.0" cy="17.0" r="2.6" fill="url(#gBall)" stroke="#9a9a9a" stroke-width="0.5"/></svg>
<svg class="abs" style="left:568.7px;top:48.0px" width="24" height="24" viewBox="0 0 24 24"><path d="M0.5 20L10.5 2.5H16L19 20H14.2L13.6 16H8L5.5 20ZM9.8 12.5H13.2L12.8 6.5Z" fill="#bdbdbd" stroke="#808080" stroke-width="1" transform="translate(1.5,0.5)"/></svg>
<svg class="abs" style="left:605.0px;top:47.5px" width="24" height="24" viewBox="0 0 24 24"><text x="2.5" y="8.5" font-size="7.5" font-family="Liberation Sans" font-weight="bold" fill="#f4f4f4" stroke="#b8b8b8" stroke-width="0.5">1.00</text><path d="M4 20V11H19V20" fill="none" stroke="#8e8e8e" stroke-width="2.6" stroke-linejoin="round"/><path d="M4 20V11H19V20" fill="none" stroke="#f6f6f6" stroke-width="1.2" stroke-linejoin="round"/><circle cx="11.5" cy="11.0" r="2.3" fill="#7a7a7a" opacity="0.5" transform="translate(0.8,0.9)"/><circle cx="11.5" cy="11.0" r="2.3" fill="url(#gBall)" stroke="#9a9a9a" stroke-width="0.5"/><circle cx="4" cy="11" r="1.6" fill="#555"/><circle cx="19" cy="11" r="1.6" fill="#555"/><circle cx="4.0" cy="20.0" r="2.5" fill="#7a7a7a" opacity="0.5" transform="translate(0.8,0.9)"/><circle cx="4.0" cy="20.0" r="2.5" fill="url(#gBall)" stroke="#9a9a9a" stroke-width="0.5"/><circle cx="19.0" cy="20.0" r="2.5" fill="#7a7a7a" opacity="0.5" transform="translate(0.8,0.9)"/><circle cx="19.0" cy="20.0" r="2.5" fill="url(#gBall)" stroke="#9a9a9a" stroke-width="0.5"/></svg>
<svg class="abs" style="left:640.6px;top:47.5px" width="24" height="24" viewBox="0 0 24 24"><path d="M4.9 15.9C5 9 8.5 6 12 6C15.5 6 19.5 10 19.7 17.7" fill="none" stroke="#8e8e8e" stroke-width="2.8" stroke-linejoin="round"/><path d="M4.9 15.9C5 9 8.5 6 12 6C15.5 6 19.5 10 19.7 17.7" fill="none" stroke="#f6f6f6" stroke-width="1.4" stroke-linejoin="round"/><circle cx="12.0" cy="6.0" r="2.8" fill="#7a7a7a" opacity="0.5" transform="translate(0.8,0.9)"/><circle cx="12.0" cy="6.0" r="2.8" fill="url(#gBall)" stroke="#9a9a9a" stroke-width="0.5"/><circle cx="4.9" cy="15.9" r="2.8" fill="#7a7a7a" opacity="0.5" transform="translate(0.8,0.9)"/><circle cx="4.9" cy="15.9" r="2.8" fill="url(#gBall)" stroke="#9a9a9a" stroke-width="0.5"/><circle cx="19.7" cy="17.7" r="2.8" fill="#7a7a7a" opacity="0.5" transform="translate(0.8,0.9)"/><circle cx="19.7" cy="17.7" r="2.8" fill="url(#gBall)" stroke="#9a9a9a" stroke-width="0.5"/></svg>
<svg class="abs" style="left:676.4px;top:47.7px" width="24" height="24" viewBox="0 0 24 24"><circle cx="12.0" cy="12.0" r="5.4" fill="#7a7a7a" opacity="0.5" transform="translate(0.8,0.9)"/><circle cx="12.0" cy="12.0" r="5.4" fill="url(#gBall)" stroke="#9a9a9a" stroke-width="0.5"/></svg>
<svg class="abs" style="left:712.0px;top:48.0px" width="24" height="24" viewBox="0 0 24 24"><path d="M20 4.5C17 1 8.5 1.5 7.5 6C6.8 9.5 14 10.5 14 13.5C14 17 6 17 3 14L1.5 17.5C6 21 16 20.5 18 16C19.5 11.5 12.5 10.5 12 8C11.5 5 17 5 19 7.5Z" fill="#b5b5b5" stroke="#7e7e7e" stroke-width="0.9" transform="translate(1.5,1)"/></svg>
<svg class="abs" style="left:748.5px;top:48.0px" width="24" height="24" viewBox="0 0 24 24"><path d="M1.5 7L9 2.5H22L15 6.5V21.5L1.5 21Z" fill="#c9c9c9" stroke="#8a8a8a" stroke-width="0.9"/><path d="M14.5 6.5H22V2.5M14.5 6.5V12L22 8V12.5L14.5 17V21.5L22 17" fill="#dcdcdc" stroke="#8a8a8a" stroke-width="0.9"/></svg>
<svg class="abs" style="left:785.0px;top:47.5px" width="24" height="24" viewBox="0 0 24 24"><rect x="4" y="1.5" width="2.8" height="2.8" fill="#ddd" stroke="#999" stroke-width="0.6"/><rect x="16.5" y="1.5" width="2.8" height="2.8" fill="#ddd" stroke="#999" stroke-width="0.6"/><path d="M4.5 17C5 8 8 5 12 5C16 5 18.5 8 19 17" fill="none" stroke="#8e8e8e" stroke-width="2.2" stroke-linejoin="round"/><path d="M4.5 17C5 8 8 5 12 5C16 5 18.5 8 19 17" fill="none" stroke="#f6f6f6" stroke-width="0.8" stroke-linejoin="round"/><path d="M5.4 4.3V12M17.9 4.3V12" stroke="#aaa" stroke-width="0.7"/><circle cx="4.5" cy="17.5" r="2.8" fill="#7a7a7a" opacity="0.5" transform="translate(0.8,0.9)"/><circle cx="4.5" cy="17.5" r="2.8" fill="url(#gBall)" stroke="#9a9a9a" stroke-width="0.5"/><circle cx="19.0" cy="17.5" r="2.8" fill="#7a7a7a" opacity="0.5" transform="translate(0.8,0.9)"/><circle cx="19.0" cy="17.5" r="2.8" fill="url(#gBall)" stroke="#9a9a9a" stroke-width="0.5"/></svg>
<svg class="abs" style="left:834.0px;top:47.5px" width="24" height="24" viewBox="0 0 24 24"><path d="M12.00 1.40L15.90 5.80L13.25 5.80L13.25 10.55L18.00 10.55L18.00 7.90L22.40 11.80L18.00 15.70L18.00 13.05L13.25 13.05L13.25 17.80L15.90 17.80L12.00 22.20L8.10 17.80L10.75 17.80L10.75 13.05L6.00 13.05L6.00 15.70L1.60 11.80L6.00 7.90L6.00 10.55L10.75 10.55L10.75 5.80L8.10 5.80Z" fill="#555" opacity="0.3" transform="translate(0.7,0.8)"/><path d="M12.00 1.40L15.90 5.80L13.25 5.80L13.25 10.55L18.00 10.55L18.00 7.90L22.40 11.80L18.00 15.70L18.00 13.05L13.25 13.05L13.25 17.80L15.90 17.80L12.00 22.20L8.10 17.80L10.75 17.80L10.75 13.05L6.00 13.05L6.00 15.70L1.60 11.80L6.00 7.90L6.00 10.55L10.75 10.55L10.75 5.80L8.10 5.80Z" fill="url(#gArr)" stroke="#6f6f6f" stroke-width="0.7"/></svg>
<svg class="abs" style="left:869.7px;top:47.5px" width="24" height="24" viewBox="0 0 24 24"><path d="M3.5 12C3.5 17.5 8 21.5 12.5 21.5C17.5 21.5 21 17.5 21 12.5C21 8.5 18.5 5.5 15 4.8L16 1.5L9 3.5L13.5 9.5L14 7.8C16.5 8.5 18 10.5 18 12.5C18 15.8 15.5 18.3 12.5 18.3C9.5 18.3 7 16 7 12Z" fill="url(#gArr)" stroke="#707070" stroke-width="0.7"/></svg>
<svg class="abs" style="left:905.5px;top:47.5px" width="24" height="24" viewBox="0 0 24 24"><path d="M5 2.5H20.5V15C20.5 19 17 21.5 12 22M5 2.5L4 5" fill="none" stroke="#808080" stroke-width="2.4" stroke-linecap="round"/><path d="M9 7H16V14C16 16 14 17.5 11 17.5M9 7C7.5 9 8.5 11 10 10.5" fill="none" stroke="#808080" stroke-width="2.2" stroke-linecap="round"/></svg>
<svg class="abs" style="left:941.7px;top:48.0px" width="24" height="24" viewBox="0 0 24 24"><path d="M1 12L6 7V10.5H10V12V13.5H6V17Z" fill="#8a8a8a" stroke="#777" stroke-width="0.6"/><path d="M22 12L17 7V10.5H13V13.5H17V17Z" fill="#8a8a8a" stroke="#777" stroke-width="0.6"/><rect x="10.2" y="2.5" width="2.6" height="19" fill="#9a9a9a" stroke="#7a7a7a" stroke-width="0.6"/></svg>
<svg class="abs" style="left:977.7px;top:47.5px" width="24" height="24" viewBox="0 0 24 24"><path d="M10 1.5L19.5 11.5H14.5V21.5H6.5V11.5H1Z" fill="#555" opacity="0.35" transform="translate(1,1.2)"/><path d="M10 1.5L19.5 11.5H14.5V21.5H6.5V11.5H1Z" fill="url(#gArr)" stroke="#777" stroke-width="0.6"/></svg>
<svg class="abs" style="left:1014.0px;top:47.5px" width="24" height="24" viewBox="0 0 24 24"><path d="M6.5 1.5H14.5V11.5H19.5L10 21.5L1 11.5H6.5Z" fill="#555" opacity="0.35" transform="translate(1,1.2)"/><path d="M6.5 1.5H14.5V11.5H19.5L10 21.5L1 11.5H6.5Z" fill="url(#gArr)" stroke="#777" stroke-width="0.6"/></svg>
<svg class="abs" style="left:1049.8px;top:47.5px" width="24" height="24" viewBox="0 0 24 24"><path d="M2 4V2H6M9 2H12M15 2H19" stroke="#6e6e6e" stroke-width="1.8" fill="none" stroke-dasharray="none"/><path d="M20.5 5V20.5H16M2 7V10" stroke="#9a9a9a" stroke-width="1.6" fill="none" stroke-dasharray="2 1.5"/><rect x="2" y="11.5" width="10" height="10" fill="#808080"/><rect x="5" y="14.5" width="4" height="4" fill="#e6e6e6"/><path d="M11 9L16 4.5L18.5 7L13.5 11.5Z" fill="#8c8c8c"/></svg>
<svg class="abs" style="left:1085.6px;top:47.5px" width="24" height="24" viewBox="0 0 24 24"><path d="M9.7 5.2L16.2 1.5L22.2 17.7L6.5 22.1L10.5 15Z" fill="#7a7a7a" stroke="#555" stroke-width="0.6"/><path d="M16.2 1.5L16.5 17L22.2 17.7Z" fill="#8a8a8a"/><path d="M6.5 1.5L1.3 6.8L10.1 15.6L14.6 11.2Z" fill="#b9b9b9" stroke="#555" stroke-width="0.9"/><path d="M4.5 3.5L12 11M3 5.2L10.8 12.8" stroke="#e6e6e6" stroke-width="0.8"/><path d="M10.1 15.6L14.6 11.2L13.2 16.8Z" fill="#fff"/></svg>
<svg class="abs" style="left:1121.8px;top:47.5px" width="24" height="24" viewBox="0 0 24 24"><path d="M2 9L8 3.5L13 8.5L20.5 4" fill="none" stroke="#7a7a7a" stroke-width="3"/><path d="M2 9L8 3.5L13 8.5L20.5 4" fill="none" stroke="#fdfdfd" stroke-width="1.4"/><path d="M2 20.5C5 15 8 15.5 11 18C14 20.5 17 20 20.5 15.5" fill="none" stroke="#7a7a7a" stroke-width="3"/><path d="M2 20.5C5 15 8 15.5 11 18C14 20.5 17 20 20.5 15.5" fill="none" stroke="#fdfdfd" stroke-width="1.4"/><path d="M8.5 11H16L12.2 15.5Z" fill="#808080"/></svg>
<svg class="abs" style="left:1158.0px;top:48.5px" width="24" height="24" viewBox="0 0 24 24"><path d="M9.5 2H14.5V5.5H18V10H14.5V13.5H9.5V10H6V5.5H9.5Z" fill="#808080" transform="translate(0,-0.5)"/><rect x="1" y="16.5" width="22" height="2.6" fill="#ddd" stroke="#999" stroke-width="0.7"/><circle cx="12.0" cy="17.8" r="2.6" fill="#7a7a7a" opacity="0.5" transform="translate(0.8,0.9)"/><circle cx="12.0" cy="17.8" r="2.6" fill="url(#gBall)" stroke="#9a9a9a" stroke-width="0.5"/></svg>
<svg class="abs" style="left:1193.7px;top:48.5px" width="24" height="24" viewBox="0 0 24 24"><rect x="6" y="3.8" width="12" height="3.6" fill="#7f7f7f"/><rect x="1" y="16.5" width="22" height="2.6" fill="#ddd" stroke="#999" stroke-width="0.7"/><circle cx="12.0" cy="17.8" r="2.6" fill="#7a7a7a" opacity="0.5" transform="translate(0.8,0.9)"/><circle cx="12.0" cy="17.8" r="2.6" fill="url(#gBall)" stroke="#9a9a9a" stroke-width="0.5"/></svg>
<svg class="abs" style="left:1229.7px;top:48.0px" width="24" height="24" viewBox="0 0 24 24"><path d="M3 17.5L11 13.5L21.5 16.5L13.5 21Z" fill="#f2f2f2" stroke="#7e7e7e" stroke-width="1.4"/><path d="M2 6.5L11 2.5L21 5.5V14.5L12.5 18.5L2 15Z" fill="#8e8e8e"/><path d="M2 6.5L12.5 10L21 5.5L11 2.5Z" fill="#b4b4b4"/><path d="M12.5 10V18.5" stroke="#777" stroke-width="0.7"/></svg>
<div class="abs" style="left:159px;top:8px;width:1px;height:23px;background:#d9d7d3"></div>
<div class="abs" style="left:278px;top:8px;width:1px;height:23px;background:#d9d7d3"></div>
<div class="abs" style="left:401px;top:8px;width:1px;height:23px;background:#d9d7d3"></div>
<div class="abs" style="left:448px;top:8px;width:1px;height:23px;background:#d9d7d3"></div>
<div class="abs" style="left:941px;top:8px;width:1px;height:23px;background:#d9d7d3"></div>
<div class="abs" style="left:988px;top:8px;width:1px;height:23px;background:#d9d7d3"></div>
<div class="abs" style="left:1107px;top:8px;width:1px;height:23px;background:#d9d7d3"></div>
<div class="abs" style="left:1226px;top:8px;width:1px;height:23px;background:#d9d7d3"></div>
<div class="abs" style="left:3px;top:17px;width:4px;height:1px;background:#c9c7c3;box-shadow:0 1px 0 #fff"></div><div class="abs" style="left:3px;top:20px;width:4px;height:1px;background:#c9c7c3;box-shadow:0 1px 0 #fff"></div><div class="abs" style="left:3px;top:23px;width:4px;height:1px;background:#c9c7c3;box-shadow:0 1px 0 #fff"></div>
<div class="abs" style="left:681px;top:17px;width:4px;height:1px;background:#c9c7c3;box-shadow:0 1px 0 #fff"></div><div class="abs" style="left:681px;top:20px;width:4px;height:1px;background:#c9c7c3;box-shadow:0 1px 0 #fff"></div><div class="abs" style="left:681px;top:23px;width:4px;height:1px;background:#c9c7c3;box-shadow:0 1px 0 #fff"></div>
<div class="abs" style="left:838px;top:17px;width:4px;height:1px;background:#c9c7c3;box-shadow:0 1px 0 #fff"></div><div class="abs" style="left:838px;top:20px;width:4px;height:1px;background:#c9c7c3;box-shadow:0 1px 0 #fff"></div><div class="abs" style="left:838px;top:23px;width:4px;height:1px;background:#c9c7c3;box-shadow:0 1px 0 #fff"></div>
<div class="abs" style="left:3px;top:57px;width:4px;height:1px;background:#c9c7c3;box-shadow:0 1px 0 #fff"></div><div class="abs" style="left:3px;top:60px;width:4px;height:1px;background:#c9c7c3;box-shadow:0 1px 0 #fff"></div><div class="abs" style="left:3px;top:63px;width:4px;height:1px;background:#c9c7c3;box-shadow:0 1px 0 #fff"></div>
<div class="abs" style="left:304px;top:57px;width:4px;height:1px;background:#c9c7c3;box-shadow:0 1px 0 #fff"></div><div class="abs" style="left:304px;top:60px;width:4px;height:1px;background:#c9c7c3;box-shadow:0 1px 0 #fff"></div><div class="abs" style="left:304px;top:63px;width:4px;height:1px;background:#c9c7c3;box-shadow:0 1px 0 #fff"></div>
<div class="abs" style="left:821px;top:57px;width:4px;height:1px;background:#c9c7c3;box-shadow:0 1px 0 #fff"></div><div class="abs" style="left:821px;top:60px;width:4px;height:1px;background:#c9c7c3;box-shadow:0 1px 0 #fff"></div><div class="abs" style="left:821px;top:63px;width:4px;height:1px;background:#c9c7c3;box-shadow:0 1px 0 #fff"></div>
<!-- Draft combo -->
<div class="abs" style="left:455px;top:8px;width:182px;height:23px;border:1px solid #b3afa9;border-radius:4px;background:linear-gradient(#fefefe,#ecebea)"></div>
<svg class="abs" style="left:460px;top:10px" width="18" height="18" viewBox="0 0 18 18">
<path d="M4.2 1V16.5H17" fill="none" stroke="#555" stroke-width="1"/>
<path d="M6.5 13V2.5L13 13Z" fill="#e6c81c" stroke="#8a7a10" stroke-width="0.6"/>
<path d="M8 10.5V7L10.5 10.5Z" fill="#888"/>
<path d="M1.5 12.5H16.5V15H4.5V17H1.5Z" fill="#f0900c" stroke="#a55a05" stroke-width="0.6"/>
</svg>
<div class="t" style="left:481px;top:13px;font-size:14.4px;color:#3c3c3c">Draft</div>
<svg class="abs" style="left:622px;top:12px" width="10" height="16" viewBox="0 0 10 16"><path d="M2.5 6L5 3L7.5 6ZM2.5 10.5L5 13.5L7.5 10.5Z" fill="#6a6a6a"/></svg>
<!-- Top button -->
<div class="abs" style="left:11px;top:48px;width:83px;height:24px;border:1px solid #b3afa9;border-radius:4px;background:linear-gradient(#fefefe,#ecebea)"></div>
<svg class="abs" style="left:29px;top:51px" width="18" height="18" viewBox="0 0 18 18">
<path d="M3.7 2.5L14.1 1.3L14.5 13.6L3.3 16.3Z" fill="#3cc6cc" stroke="#17808a" stroke-width="0.8"/>
<path d="M6.8 5.2L11.8 4L11.4 10.5L6.4 12.5Z" fill="#fff" stroke="#111" stroke-width="1.1"/>
<path d="M2.5 1V4.5M15 13V17M1.5 14.5H4.5M13.5 2.5H16.5M15 12.5V17" stroke="#17808a" stroke-width="0.6"/>
</svg>
<div class="t" style="left:49px;top:53px;font-size:14.4px">Top</div>
<!-- construction btn -->
<div class="abs" style="left:96px;top:48px;width:20px;height:24px;border:1px solid #b3afa9;border-radius:4px;background:linear-gradient(#fefefe,#ecebea)"></div>
<svg class="abs" style="left:97px;top:53px" width="18" height="14" viewBox="0 0 18 14">
<path d="M2.2 9L8.6 5.3" stroke="#0d5a55" stroke-width="3.4" stroke-linecap="round"/>
<path d="M2.2 9L8.6 5.3" stroke="#1ab0a8" stroke-width="2.2" stroke-linecap="round"/>
<path d="M16.5 2L7.6 3.4L11.5 9.6Z" fill="#d8f4ec" stroke="#3a8a80" stroke-width="0.8"/>
</svg>
<!-- color btns -->
<div class="abs" style="left:118px;top:48px;width:20px;height:24px;border:1px solid #b3afa9;border-radius:4px;background:linear-gradient(#fefefe,#ecebea)"></div>
<div class="abs" style="left:120px;top:52px;width:16px;height:16px;background:#000"></div>
<div class="abs" style="left:140px;top:48px;width:20px;height:24px;border:1px solid #b3afa9;border-radius:4px;background:linear-gradient(#fefefe,#ecebea)"></div>
<div class="abs" style="left:142px;top:52px;width:16px;height:16px;background:#c9c9c9"></div>
<!-- spinboxes -->
<div class="abs" style="left:162px;top:50px;width:48px;height:20px;border:1px solid #b3afa9;border-radius:3px;background:#fff"></div>
<div class="abs" style="left:193px;top:51px;width:16px;height:18px;border-left:1px solid #d2cfcb;background:linear-gradient(#fafafa,#ebeae8);border-radius:0 2px 2px 0"></div>
<svg class="abs" style="left:196px;top:53px" width="10" height="14" viewBox="0 0 10 14"><path d="M3.2 4.2L5 2.2L6.8 4.2ZM3.2 10L5 12L6.8 10Z" fill="#777"/></svg>
<div class="t" style="left:166px;top:54px;font-size:14.4px;color:#333">2px</div>
<div class="abs" style="left:212px;top:50px;width:62px;height:20px;border:1px solid #b3afa9;border-radius:3px;background:#fff"></div>
<div class="abs" style="left:258px;top:51px;width:15px;height:18px;border-left:1px solid #d2cfcb;background:linear-gradient(#fafafa,#ebeae8);border-radius:0 2px 2px 0"></div>
<svg class="abs" style="left:261px;top:53px" width="10" height="14" viewBox="0 0 10 14"><path d="M3.2 4.2L5 2.2L6.8 4.2ZM3.2 10L5 12L6.8 10Z" fill="#777"/></svg>
<div class="t" style="left:217px;top:54px;font-size:14.4px;color:#333">0,20</div>
<!-- apply color btn -->
<div class="abs" style="left:277px;top:48px;width:20px;height:24px;border:1px solid #b3afa9;border-radius:4px;background:linear-gradient(#fefefe,#ecebea)"></div>
<svg class="abs" style="left:279px;top:51px" width="17" height="18" viewBox="0 0 17 18">
<rect x="2" y="1.5" width="4" height="15" fill="#444"/>
<rect x="2.5" y="2" width="3" height="3.5" fill="#e22"/><rect x="2.5" y="5.5" width="3" height="4" fill="#ee0"/><rect x="2.5" y="9.5" width="3" height="3.5" fill="#2c2"/>
<path d="M5 8H10V5L15.5 9.5L10 14V11H5Z" fill="#2a6fd8" stroke="#1a3f8a" stroke-width="0.7"/>
</svg>
<!-- overflow >> -->
<svg class="abs" style="left:1287px;top:55px" width="12" height="10" viewBox="0 0 12 10"><path d="M2 2L5 5L2 8M6 2L9 5L6 8" fill="none" stroke="#000" stroke-width="1.6"/></svg>

<div class="abs" style="left:1281px;top:84px;width:1px;height:4px;background:#cdcac6;box-shadow:1px 0 0 #fff"></div><div class="abs" style="left:1284px;top:84px;width:1px;height:4px;background:#cdcac6;box-shadow:1px 0 0 #fff"></div><div class="abs" style="left:1287px;top:84px;width:1px;height:4px;background:#cdcac6;box-shadow:1px 0 0 #fff"></div>
<div class="abs" style="left:1273px;top:92px;width:24px;height:24px;border:1px solid #b8b4ae;border-radius:4px;background:linear-gradient(#f3f2f1,#dcdad7)"></div>
<svg class="abs" style="left:1273.5px;top:92.5px" width="23" height="23" viewBox="0 0 23 23"><path d="M8 10.5V7.5C8 3.5 15 3.5 15 7.5V10.5" fill="none" stroke="#0a3a2e" stroke-width="2.6"/><path d="M8 10.5V7.5C8 3.5 15 3.5 15 7.5V10.5" fill="none" stroke="#16ac86" stroke-width="1.2"/><rect x="6.5" y="10.5" width="10" height="8" fill="#16ac86" stroke="#0a3a2e" stroke-width="0.8"/><path d="M11 11V18M13 11V18M15 11V18" stroke="#8fe0c8" stroke-width="0.6"/></svg>
<div class="abs" style="left:1273px;top:118px;width:24px;height:24px;border:1px solid #b8b4ae;border-radius:4px;background:linear-gradient(#fdfdfd,#eceae8)"></div>
<svg class="abs" style="left:1273.5px;top:118.5px" width="23" height="23" viewBox="0 0 23 23"><path d="M5 17.5L18 6" stroke="#0a3a2e" stroke-width="3.4" stroke-linecap="round"/><path d="M5 17.5L18 6" stroke="#16ac86" stroke-width="2" stroke-linecap="round"/><ellipse cx="11.5" cy="11.8" rx="3.4" ry="3" transform="rotate(-40 11.5 11.8)" fill="#16ac86" stroke="#0a3a2e" stroke-width="0.8"/></svg>
<div class="abs" style="left:1273px;top:144px;width:24px;height:24px;border:1px solid #b8b4ae;border-radius:4px;background:linear-gradient(#fdfdfd,#eceae8)"></div>
<svg class="abs" style="left:1273.5px;top:144.5px" width="23" height="23" viewBox="0 0 23 23"><path d="M11.5 4.5V15.5M5 16.5H18" stroke="#0a3a2e" stroke-width="3" /><path d="M11.5 4.5V15.5M5 16.5H18" stroke="#16ac86" stroke-width="1.8"/></svg>
<div class="abs" style="left:1273px;top:170px;width:24px;height:24px;border:1px solid #b8b4ae;border-radius:4px;background:linear-gradient(#f3f2f1,#dcdad7)"></div>
<svg class="abs" style="left:1273.5px;top:170.5px" width="23" height="23" viewBox="0 0 23 23"><path d="M7.5 5.3V17.7M15.5 5.3V17.7M5.3 7.5H17.7M5.3 15.5H17.7" stroke="#0a3a2e" stroke-width="3.8" stroke-linecap="round"/><path d="M7.5 5.3V17.7M15.5 5.3V17.7M5.3 7.5H17.7M5.3 15.5H17.7" stroke="#16ac86" stroke-width="2.4" stroke-linecap="round"/></svg>
<div class="abs" style="left:1273px;top:196px;width:24px;height:24px;border:1px solid #b8b4ae;border-radius:4px;background:linear-gradient(#fdfdfd,#eceae8)"></div>
<svg class="abs" style="left:1273.5px;top:196.5px" width="23" height="23" viewBox="0 0 23 23"><path d="M5.5 6L17.5 17.5M17.5 6L5.5 17.5" stroke="#0a3a2e" stroke-width="4"/><path d="M5.5 6L17.5 17.5M17.5 6L5.5 17.5" stroke="#16ac86" stroke-width="2.6"/></svg>
<div class="abs" style="left:1273px;top:222px;width:24px;height:24px;border:1px solid #b8b4ae;border-radius:4px;background:linear-gradient(#fdfdfd,#eceae8)"></div>
<svg class="abs" style="left:1273.5px;top:222.5px" width="23" height="23" viewBox="0 0 23 23"><path d="M8 7L18.5 12.5M5 11.5L15.5 17" stroke="#0a3a2e" stroke-width="3.2"/><path d="M8 7L18.5 12.5M5 11.5L15.5 17" stroke="#16ac86" stroke-width="1.8"/></svg>
<div class="abs" style="left:1273px;top:248px;width:24px;height:24px;border:1px solid #b8b4ae;border-radius:4px;background:linear-gradient(#f3f2f1,#dcdad7)"></div>
<svg class="abs" style="left:1273.5px;top:248.5px" width="23" height="23" viewBox="0 0 23 23"><path d="M9 14.5L18.5 6" stroke="#0a3a2e" stroke-width="3.2" stroke-linecap="round"/><path d="M9 14.5L18.5 6" stroke="#16ac86" stroke-width="1.8" stroke-linecap="round"/><circle cx="7.5" cy="16" r="3.2" fill="#16ac86" stroke="#0a3a2e" stroke-width="0.8"/></svg>
<div class="abs" style="left:1273px;top:274px;width:24px;height:24px;border:1px solid #b8b4ae;border-radius:4px;background:linear-gradient(#fdfdfd,#eceae8)"></div>
<svg class="abs" style="left:1273.5px;top:274.5px" width="23" height="23" viewBox="0 0 23 23"><path d="M11.5 5L18 11.5L11.5 18L5 11.5Z" fill="none" stroke="#16ac86" stroke-width="1.6"/><circle cx="11.5" cy="5.5" r="2.4" fill="#16ac86" stroke="#0a3a2e" stroke-width="0.6"/><circle cx="17.5" cy="11.5" r="2.4" fill="#16ac86" stroke="#0a3a2e" stroke-width="0.6"/><circle cx="11.5" cy="17.5" r="2.4" fill="#16ac86" stroke="#0a3a2e" stroke-width="0.6"/><circle cx="5.5" cy="11.5" r="2.4" fill="#16ac86" stroke="#0a3a2e" stroke-width="0.6"/></svg>
<div class="abs" style="left:1273px;top:300px;width:24px;height:24px;border:1px solid #b8b4ae;border-radius:4px;background:linear-gradient(#f3f2f1,#dcdad7)"></div>
<svg class="abs" style="left:1273.5px;top:300.5px" width="23" height="23" viewBox="0 0 23 23"><circle cx="11.5" cy="11.5" r="6.8" fill="none" stroke="#0a3a2e" stroke-width="2.6"/><circle cx="11.5" cy="11.5" r="6.8" fill="none" stroke="#16ac86" stroke-width="1.4"/><circle cx="11.5" cy="11.5" r="2" fill="#16ac86"/></svg>
<div class="abs" style="left:1273px;top:326px;width:24px;height:24px;border:1px solid #b8b4ae;border-radius:4px;background:linear-gradient(#fdfdfd,#eceae8)"></div>
<svg class="abs" style="left:1273.5px;top:326.5px" width="23" height="23" viewBox="0 0 23 23"><circle cx="6" cy="11.5" r="2.2" fill="#16ac86" stroke="#0a3a2e" stroke-width="0.5"/><circle cx="11.5" cy="11.5" r="2.2" fill="#16ac86" stroke="#0a3a2e" stroke-width="0.5"/><circle cx="17" cy="11.5" r="2.2" fill="#16ac86" stroke="#0a3a2e" stroke-width="0.5"/></svg>
<div class="abs" style="left:1273px;top:352px;width:24px;height:24px;border:1px solid #b8b4ae;border-radius:4px;background:linear-gradient(#fdfdfd,#eceae8)"></div>
<svg class="abs" style="left:1273.5px;top:352.5px" width="23" height="23" viewBox="0 0 23 23"><path d="M5.5 10.5L15.5 16.5" stroke="#0a3a2e" stroke-width="3"/><path d="M5.5 10.5L15.5 16.5" stroke="#16ac86" stroke-width="1.7"/><circle cx="15" cy="7.5" r="2.2" fill="#16ac86" stroke="#0a3a2e" stroke-width="0.5"/></svg>
<div class="abs" style="left:1273px;top:378px;width:24px;height:24px;border:1px solid #b8b4ae;border-radius:4px;background:linear-gradient(#fdfdfd,#eceae8)"></div>
<svg class="abs" style="left:1273.5px;top:378.5px" width="23" height="23" viewBox="0 0 23 23"><path d="M11.8 7.6V15.9M7.6 11.8H15.9" stroke="#0a3a2e" stroke-width="3.8" stroke-linecap="round"/><path d="M11.8 7.6V15.9M7.6 11.8H15.9" stroke="#16ac86" stroke-width="2.4" stroke-linecap="round"/></svg>
<div class="abs" style="left:1273px;top:404px;width:24px;height:24px;border:1px solid #b8b4ae;border-radius:4px;background:linear-gradient(#fdfdfd,#eceae8)"></div>
<svg class="abs" style="left:1273.5px;top:404.5px" width="23" height="23" viewBox="0 0 23 23"><path d="M9.5 8.5V17M8 16H14.5M9.5 9.5H17M17 8.5V11" stroke="#0a3a2e" stroke-width="1.1" fill="none"/><text x="11" y="8" font-size="4.5" font-family="Liberation Sans" font-weight="bold" fill="#168a6c">1.00</text><text x="7.5" y="16" font-size="4.5" font-family="Liberation Sans" font-weight="bold" fill="#168a6c" transform="rotate(-90 7.5 16)">1.00</text></svg>
<div class="abs" style="left:1273px;top:430px;width:24px;height:24px;border:1px solid #b8b4ae;border-radius:4px;background:linear-gradient(#f3f2f1,#dcdad7)"></div>
<svg class="abs" style="left:1273.5px;top:430.5px" width="23" height="23" viewBox="0 0 23 23"><rect x="5" y="5" width="13" height="13" fill="#16ac86" stroke="#0a3a2e" stroke-width="0.9"/><circle cx="8.5" cy="14.5" r="1.3" fill="none" stroke="#0a3a2e" stroke-width="0.8"/></svg>
<!-- view border -->
<div class="abs" style="left:231px;top:79px;width:1040px;height:1px;background:#fdfdfb"></div>
<div class="abs" style="left:231px;top:79px;width:1px;height:603px;background:#fdfdfb"></div>
<div class="abs" style="left:232px;top:681px;width:1038px;height:1px;background:#a9a8a2"></div>
<div class="abs" style="left:1270px;top:80px;width:1px;height:602px;background:#f8f7f5"></div>
<!-- splitter dots -->
<div class="abs" style="left:227px;top:394px;width:4px;height:1px;background:#c4c1bc;box-shadow:0 1px 0 #fff"></div>
<div class="abs" style="left:227px;top:397px;width:4px;height:1px;background:#c4c1bc;box-shadow:0 1px 0 #fff"></div>
<div class="abs" style="left:227px;top:400px;width:4px;height:1px;background:#c4c1bc;box-shadow:0 1px 0 #fff"></div>
<!-- tab bar -->
<div class="abs" style="left:0;top:713px;width:1300px;height:1px;background:#d6d4d0"></div>
<div class="abs" style="left:232px;top:681px;width:207px;height:33px;border:1px solid #b9b5b0;border-top:none;border-radius:0 0 3px 3px;background:linear-gradient(#f4f3f2,#fdfdfc)"></div>
<svg class="abs" style="left:238px;top:688px" width="18" height="18" viewBox="0 0 18 18">
<path d="M2 2H8.5V4.2H4.4V7H7.8V9.1H4.4V15H2Z" fill="#e8261a"/>
<g transform="translate(10.6,11.2)">
<path d="M-1 -5.6H1L1.3 -4.2L2.7 -3.6L3.9 -4.5L5.3 -3.1L4.4 -1.9L5 -0.5L6.4 -0.2V1.8L5 2.1L4.4 3.5L5.3 4.7L3.9 6.1L2.7 5.2L1.3 5.8L1 7.2H-1L-1.3 5.8L-2.7 5.2L-3.9 6.1L-5.3 4.7L-4.4 3.5L-5 2.1L-6.4 1.8V-0.2L-5 -0.5L-4.4 -1.9L-5.3 -3.1L-3.9 -4.5L-2.7 -3.6L-1.3 -4.2Z" fill="#1a2aa8" transform="translate(0,-0.8) scale(0.92)"/>
<circle cx="0" cy="0" r="2" fill="#fff"/>
</g>
</svg>
<div class="t" style="left:263px;top:691px;font-size:14.4px">F2-T18-ejemplo-ini : 1</div>
<svg class="abs" style="left:413px;top:690px" width="16" height="16" viewBox="0 0 16 16">
<path d="M3.5 3.5L12.5 12.5M12.5 3.5L3.5 12.5" stroke="#5a5a58" stroke-width="3.4" stroke-linecap="round"/>
</svg>
<!-- status -->
<div class="t" style="left:1177px;top:723px;font-size:14px">165.87 x 96.04 mm</div>

</body></html>
